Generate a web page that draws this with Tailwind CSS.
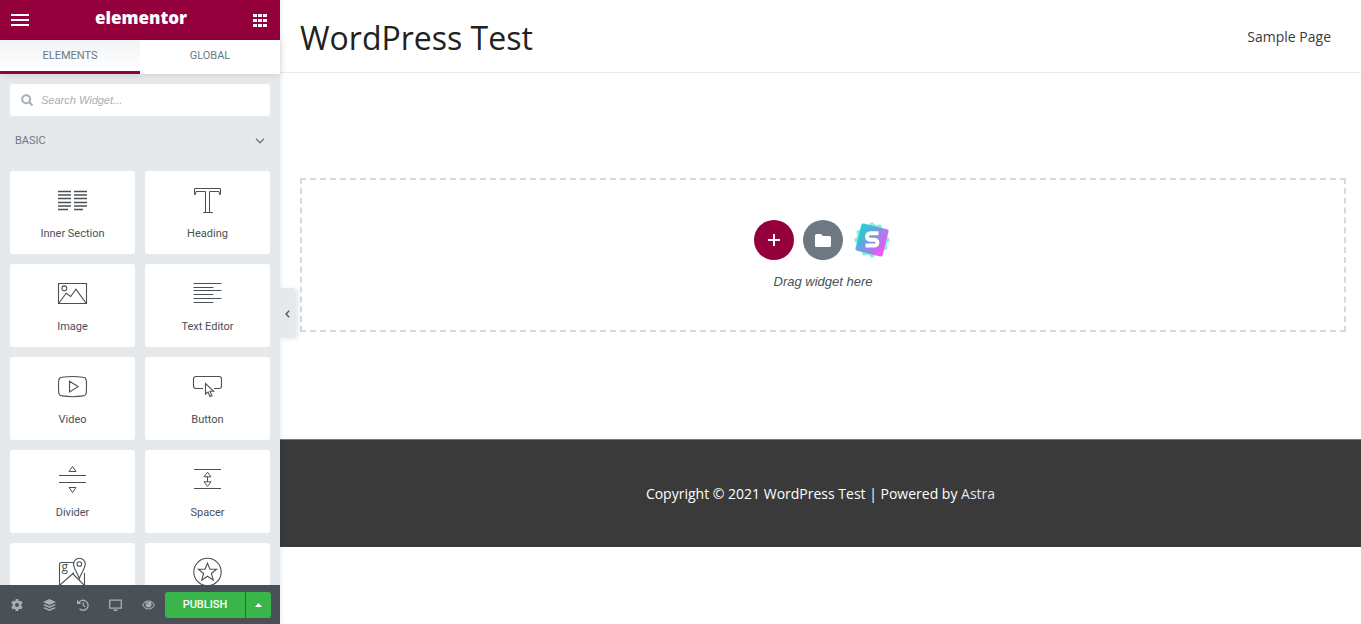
<!DOCTYPE html>
<html lang="en">
<head>
  <meta charset="UTF-8" />
  <meta name="viewport" content="width=device-width, initial-scale=1.0" />
  <title>Elementor | WordPress Test</title>
  <script src="https://cdn.jsdelivr.net/npm/@tailwindcss/browser@4"></script>
</head>
<body class="flex h-screen overflow-hidden bg-white font-['Roboto',sans-serif] text-[11px] text-[#495157]">

  <!-- Panel -->
  <aside class="relative z-10 flex w-[280px] shrink-0 flex-col bg-[#e6e9ec] shadow-[0_0_5px_rgba(0,0,0,0.12)]">
    <header class="flex h-10 shrink-0 items-center justify-between bg-[#93003c] px-[11px] text-white">
      <button type="button" aria-label="Menu">
        <svg class="block" width="18" height="12" fill="currentColor"><path d="M0 0h18v2H0zM0 5h18v2H0zM0 10h18v2H0z"/></svg>
      </button>
      <span class="pb-1 font-['Open_Sans',sans-serif] text-[17px] leading-6 font-extrabold">elementor</span>
      <button type="button" aria-label="Widgets" class="mr-0.5">
        <svg class="block" width="14" height="13" fill="currentColor"><path d="M0 0h4v3H0zM5 0h4v3H5zM10 0h4v3h-4zM0 5h4v3H0zM5 5h4v3H5zM10 5h4v3h-4zM0 10h4v3H0zM5 10h4v3H5zM10 10h4v3h-4z"/></svg>
      </button>
    </header>

    <nav class="relative grid h-[34px] shrink-0 grid-cols-2 bg-white text-[#6d7882] shadow-[0_0_8px_rgba(0,0,0,0.12)]">
      <button type="button" class="border-b-3 border-[#93003c] bg-linear-to-b from-[#f1f3f5] to-white pt-0.5">ELEMENTS</button>
      <button type="button" class="border-b-3 border-transparent pt-0.5">GLOBAL</button>
    </nav>

    <div class="min-h-0 flex-1 overflow-hidden px-2.5 pt-2.5">
      <label class="flex h-8 items-center gap-2 rounded-[3px] bg-white px-[11px] text-[#a4afb7]">
        <svg class="shrink-0" width="12" height="12" fill="none" stroke="currentColor" stroke-width="2"><circle cx="5.2" cy="5.2" r="4"/><path d="M8 8l3.4 3.4"/></svg>
        <input type="text" aria-label="Search Widget" placeholder="Search Widget..." class="w-full font-['Liberation_Sans',sans-serif] italic outline-none placeholder:text-[#a4afb7]" />
      </label>

      <button type="button" class="flex h-12 w-full items-center justify-between px-[5px] pt-0.5 text-[#6d7882]">
        BASIC
        <svg width="10" height="6" fill="none" stroke="currentColor" stroke-width="1.4"><path d="M1 .8l4 4 4-4"/></svg>
      </button>

      <div class="grid grid-cols-2 gap-2.5 pt-[7px]">
        <button type="button" class="flex h-[83px] flex-col items-center gap-3 rounded-[3px] bg-white pt-3.5 leading-3">
          <svg class="shrink-0" width="31" height="31" fill="none" stroke="currentColor" stroke-width="1.4"><path d="M1 6.500h13M1 10h13M1 13.500h13M1 17.500h13M1 21h13M1 24.500h10M17 6.500h13M17 10h13M17 13.500h13M17 17.500h13M17 21h13M17 24.500h9"/></svg>
          Inner Section
        </button>
        <button type="button" class="flex h-[83px] flex-col items-center gap-3 rounded-[3px] bg-white pt-3.5 leading-3">
          <svg class="shrink-0" width="31" height="31" fill="none" stroke="currentColor"><path d="M2.500 9.500v-6h26v6h-1l-.5-3h-9.500v21h3h-9h2v-21H4l-.5 3z"/></svg>
          Heading
        </button>
        <button type="button" class="flex h-[83px] flex-col items-center gap-3 rounded-[3px] bg-white pt-3.5 leading-3">
          <svg class="shrink-0" width="31" height="31" fill="none" stroke="currentColor" stroke-width="1.1"><path d="M1.500 5.500h28v20h-28zM2 25l7.200-9.800 4.500 3.300 5.200-7.200L29 25"/><circle cx="7.300" cy="10.300" r="2.400"/></svg>
          Image
        </button>
        <button type="button" class="flex h-[83px] flex-col items-center gap-3 rounded-[3px] bg-white pt-3.5 leading-3">
          <svg class="shrink-0" width="31" height="31" fill="none" stroke="currentColor"><path d="M1.500 5.500h28M1.500 9.500h20M1.500 12.500h28M1.500 16.500h20M1.500 20.500h28M1.500 24.500h20"/></svg>
          Text Editor
        </button>
        <button type="button" class="flex h-[83px] flex-col items-center gap-3 rounded-[3px] bg-white pt-3.5 leading-3">
          <svg class="shrink-0" width="31" height="31" fill="none" stroke="currentColor" stroke-width="1.1"><path d="M5 6.300Q15.500 4.700 26 6.300Q29 6.600 29.300 9.500Q29.700 15.500 29.300 21.500Q29 24.600 26 24.900Q15.500 26.500 5 24.900Q2 24.600 1.700 21.500Q1.300 15.500 1.700 9.500Q2 6.600 5 6.300zM12.500 10.300v10.600l8.600-5.300z"/></svg>
          Video
        </button>
        <button type="button" class="flex h-[83px] flex-col items-center gap-3 rounded-[3px] bg-white pt-3.5 leading-3">
          <svg class="shrink-0" width="31" height="31" fill="none" stroke="currentColor" stroke-width="1.1"><path d="M11 17.500H4a2.500 2.500 0 0 1-2.500-2.500V8a2.500 2.500 0 0 1 2.500-2.500h23a2.500 2.500 0 0 1 2.500 2.500v7a2.500 2.500 0 0 1-2.500 2.500h-5"/><path d="M13.500 12.500v10.500l2.500-2 2 4.500 2-.9-2-4.400h3.600z"/></svg>
          Button
        </button>
        <button type="button" class="flex h-[83px] flex-col items-center gap-3 rounded-[3px] bg-white pt-3.5 leading-3">
          <svg class="shrink-0" width="31" height="31" fill="none" stroke="currentColor"><path d="M2 11.500h27M2 18.500h27M15.500 2.500l-3.500 5h7zM15.500 28.500l-3.500-5h7z"/></svg>
          Divider
        </button>
        <button type="button" class="flex h-[83px] flex-col items-center gap-3 rounded-[3px] bg-white pt-3.5 leading-3">
          <svg class="shrink-0" width="31" height="31" fill="none" stroke="currentColor"><path d="M2 5.500h27M2 24.500h27M15.500 8.200l-3.500 4.600h7zM15.500 22.400l-3.500-4.600h7zM15.500 12.500v5.500"/></svg>
          Spacer
        </button>
        <button type="button" class="flex h-[83px] flex-col items-center gap-3 rounded-[3px] bg-white pt-3.5 leading-3">
          <svg class="shrink-0" width="31" height="31" fill="none" stroke="currentColor" stroke-width="1.1"><path d="M16.500 5.500H4.500a2 2 0 0 0-2 2v21h25V16M3 28l14-12.500M16 17l11 11"/><path d="M22.300 21.500C20 15 16.600 11.500 16.600 7a5.800 5.800 0 0 1 11.600 0c0 4.500-3.600 8-5.900 14.500z"/><circle cx="22.400" cy="7" r="2.300"/><text x="4.500" y="14" fill="currentColor" stroke="none" class="font-['Open_Sans',sans-serif] text-[12px]">g</text></svg>
          Google Maps
        </button>
        <button type="button" class="flex h-[83px] flex-col items-center gap-3 rounded-[3px] bg-white pt-3.5 leading-3">
          <svg class="shrink-0" width="31" height="31" fill="none" stroke="currentColor" stroke-width="1.1"><circle cx="15.500" cy="15" r="13.700"/><path d="M15.500 6.200l2.500 6h6.600l-5.200 4.300 1.900 6.700-5.800-4-5.800 4 1.900-6.700-5.200-4.300H13z"/></svg>
          Icon
        </button>
      </div>
    </div>

    <footer class="relative flex h-[39px] shrink-0 items-center bg-[#495157] text-[#a4afb7]">
      <button type="button" aria-label="Settings" class="flex w-[33px] justify-center">
        <svg width="12" height="12" viewBox="0 0 24 24" fill="currentColor" fill-rule="evenodd"><path d="M9.500 0h5l.7 3.400 2.300 1.300 3.300-1.100 2.500 4.300-2.600 2.300v3.600l2.600 2.300-2.500 4.300-3.300-1.100-2.300 1.300-.7 3.400h-5l-.7-3.400-2.300-1.300-3.300 1.100L.7 16.100l2.600-2.300v-3.600L.7 7.900l2.500-4.300 3.300 1.100 2.300-1.300zM12 8a4 4 0 1 0 0 8 4 4 0 0 0 0-8z"/></svg>
      </button>
      <button type="button" aria-label="Navigator" class="flex w-[33px] justify-center">
        <svg width="13" height="12" viewBox="0 0 26 24" fill="currentColor"><path d="M13 0l13 6-13 6L0 6zM3.500 10.300L13 14.700l9.500-4.400L26 12l-13 6-13-6zM3.500 16.300L13 20.700l9.500-4.400L26 18l-13 6-13-6z"/></svg>
      </button>
      <button type="button" aria-label="History" class="flex w-[33px] justify-center">
        <svg width="12" height="12" viewBox="0 0 24 24" fill="none" stroke="currentColor" stroke-width="2.600"><path d="M3.500 7.500A10 10 0 1 1 5 19.500M12.500 6.500v6l4 3"/><path d="M0 1.500V10h8.500z" fill="currentColor" stroke="none"/></svg>
      </button>
      <button type="button" aria-label="Responsive Mode" class="flex w-[33px] justify-center">
        <svg width="13" height="12" fill="none" stroke="currentColor"><path stroke-width="1.300" d="M.7 1.200h11.600v7.900H.7z"/><path stroke-width="1.500" d="M4.500 11.200h4"/></svg>
      </button>
      <button type="button" aria-label="Preview Changes" class="flex w-[33px] justify-center">
        <svg width="13" height="10" viewBox="0 0 26 20"><path fill="none" stroke="currentColor" stroke-width="2.200" d="M1.200 10Q6 2 13 2t11.800 8Q20 18 13 18T1.200 10z"/><circle cx="13" cy="9" r="6" fill="currentColor"/><path d="M9.800 9A3.200 3.200 0 0 1 13 5.800" fill="none" stroke="#495157" stroke-width="1.500"/></svg>
      </button>
      <button type="button" class="h-[26px] w-20 rounded-l-[3px] bg-[#39b54a] pt-0.5 font-medium text-white">PUBLISH</button>
      <button type="button" aria-label="Save Options" class="ml-px flex h-[26px] w-[25px] items-center justify-center rounded-r-[3px] bg-[#39b54a] text-white">
        <svg width="7" height="4" fill="currentColor"><path d="M3.500 0L7 4H0z"/></svg>
      </button>
    </footer>

    <!-- Collapse handle -->
    <button type="button" aria-label="Hide Panel" class="absolute top-72 left-full flex h-[50px] w-[15px] items-center justify-center rounded-r-[3px] bg-[#e6e9ec] pt-0.5 shadow-[3px_1px_5px_rgba(0,0,0,0.1)]">
      <svg width="5" height="8" fill="none" stroke="currentColor" stroke-width="1.300"><path d="M4.200 .8L1 4l3.200 3.200"/></svg>
    </button>
  </aside>

  <!-- Page preview -->
  <div class="min-w-0 flex-1 font-['Open_Sans',sans-serif]">
    <header class="flex h-[73px] items-center justify-between border-b border-[#eaeaea] pr-[30px] pl-5">
      <a href="#" class="pt-1 text-[32px] leading-10 text-[#222]">WordPress Test</a>
      <a href="#" class="text-[14px] text-[#3a3a3a]">Sample Page</a>
    </header>

    <main class="pt-[105px] pr-[15px] pb-[107px] pl-5">
      <section class="flex h-[154px] flex-col items-center border-2 border-dashed border-[#d5dadf] pt-10 font-['Liberation_Sans',sans-serif]">
        <div class="flex gap-[9px]">
          <button type="button" aria-label="Add New Section" class="flex size-10 items-center justify-center rounded-full bg-[#93003c] text-white">
            <svg width="12" height="12" stroke="currentColor" stroke-width="2"><path d="M6 0v12M0 6h12"/></svg>
          </button>
          <button type="button" aria-label="Add Template" class="flex size-10 items-center justify-center rounded-full bg-[#6d7882] text-white">
            <svg width="16" height="13" fill="currentColor"><path d="M1.500 0H6l2 2h6.500A1.500 1.500 0 0 1 16 3.500v8a1.500 1.500 0 0 1-1.500 1.500h-13A1.500 1.500 0 0 1 0 11.500v-10A1.500 1.500 0 0 1 1.500 0z"/></svg>
          </button>
          <button type="button" aria-label="Starter Templates" class="flex size-10 items-center justify-center">
            <svg width="38" height="38" viewBox="0 0 38 38">
              <defs>
                <linearGradient id="starter" x1="0" y1="0.300" x2="1" y2="0.700"><stop offset="0" stop-color="#1fc9d6"/><stop offset=".5" stop-color="#7f8be6"/><stop offset="1" stop-color="#fb46fa"/></linearGradient>
              </defs>
              <g fill="#4df0c4" opacity=".7">
                <rect x="6" y="6" width="26" height="26" rx="2" transform="rotate(45 19 19)"/>
                <rect x="6" y="6" width="26" height="26" rx="2" transform="rotate(75 19 19)"/>
              </g>
              <rect x="5" y="5" width="28" height="28" rx="2" fill="url(#starter)" opacity=".93" transform="rotate(14 19 19)"/>
              <path d="M25.500 12.200h-8.200a3 3 0 0 0 0 6.600h4.200a2.900 2.900 0 0 1 0 5.800h-9" fill="none" stroke="#fff" stroke-width="4"/>
            </svg>
          </button>
        </div>
        <p class="pt-3 text-[13px] leading-5 italic">Drag widget here</p>
      </section>
    </main>

    <footer class="flex h-[108px] items-center justify-center border-t border-[#7a7a7a] bg-[#3a3a3a] text-[14px] text-white">
      <p>Copyright © 2021 WordPress Test | Powered by <a href="#" class="text-[#e0e6ee]">Astra</a></p>
    </footer>
  </div>

</body>
</html>
